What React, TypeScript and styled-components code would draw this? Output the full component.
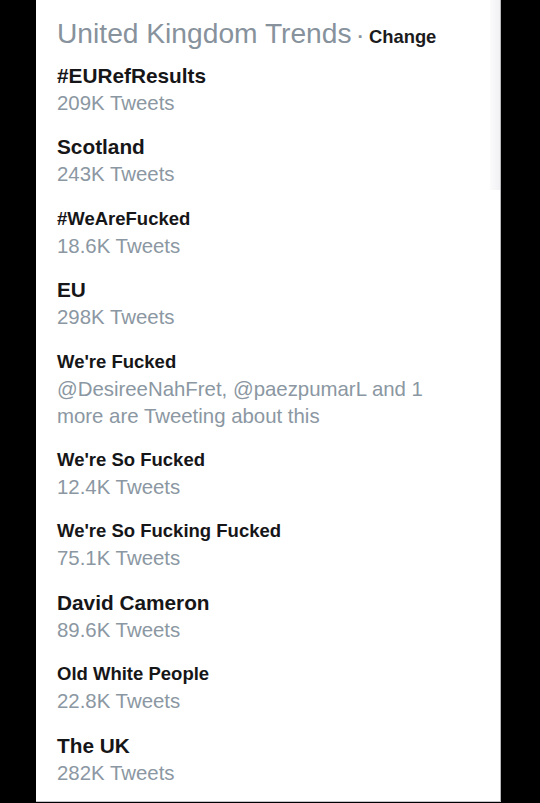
import React from "react";
import styled, { createGlobalStyle } from "styled-components";

const GlobalStyle = createGlobalStyle`
  html, body {
    margin: 0;
    padding: 0;
    background: #000;
  }
  * { box-sizing: border-box; }
`;

const Frame = styled.div`
  width: 540px;
  height: 803px;
  background: #000;
  padding-left: 36px;
  overflow: hidden;
`;

const Panel = styled.section`
  position: relative;
  width: 465px;
  height: 802px;
  background: #fff;
  border-right: 1px solid #b8b8bc;
  border-bottom: 1px solid #c4c4c8;
  padding: 17px 0 0 21px;
  font-family: "Liberation Sans", Arial, Helvetica, sans-serif;
`;

const ScrollTrack = styled.div`
  position: absolute;
  top: 0;
  right: 0;
  width: 10px;
  height: 190px;
  background: linear-gradient(to right, #fbfbfc, #f1f1f4);
`;

const Header = styled.header`
  display: flex;
  align-items: baseline;
  white-space: nowrap;
`;

const Title = styled.h2`
  margin: 0;
  font-size: 28.2px;
  line-height: 32px;
  font-weight: 400;
  color: #87929c;
`;

const Dot = styled.span`
  font-size: 19px;
  font-weight: 700;
  color: #8a959f;
  margin: 0 5px 0 6px;
`;

const ChangeLink = styled.span`
  font-size: 18.4px;
  font-weight: 700;
  color: #1b1b1d;
`;

const TrendList = styled.ol`
  list-style: none;
  margin: 13px 0 0;
  padding: 0;
  display: flex;
  flex-direction: column;
  gap: 16.4px;
`;

const Trend = styled.li`
  display: flex;
  flex-direction: column;
`;

const Name = styled.div<{ $small?: boolean }>`
  font-size: ${(p) => (p.$small ? "18.5px" : "20.8px")};
  line-height: 28px;
  font-weight: 700;
  color: #161618;
`;

const Meta = styled.div`
  max-width: 400px;
  font-size: 20.4px;
  line-height: 27px;
  color: #8b97a2;
`;

type TrendItem = { name: string; meta: string; small?: boolean };

const trends: TrendItem[] = [
  { name: "#EURefResults", meta: "209K Tweets" },
  { name: "Scotland", meta: "243K Tweets" },
  { name: "#WeAreFucked", meta: "18.6K Tweets", small: true },
  { name: "EU", meta: "298K Tweets" },
  {
    name: "We're Fucked",
    meta: "@DesireeNahFret, @paezpumarL and 1 more are Tweeting about this",
    small: true,
  },
  { name: "We're So Fucked", meta: "12.4K Tweets", small: true },
  { name: "We're So Fucking Fucked", meta: "75.1K Tweets", small: true },
  { name: "David Cameron", meta: "89.6K Tweets" },
  { name: "Old White People", meta: "22.8K Tweets", small: true },
  { name: "The UK", meta: "282K Tweets" },
];

export default function App() {
  return (
    <>
      <GlobalStyle />
      <Frame>
        <Panel>
          <ScrollTrack />
          <Header>
            <Title>United Kingdom Trends</Title>
            <Dot>·</Dot>
            <ChangeLink>Change</ChangeLink>
          </Header>
          <TrendList>
            {trends.map((t) => (
              <Trend key={t.name}>
                <Name $small={t.small}>{t.name}</Name>
                <Meta>{t.meta}</Meta>
              </Trend>
            ))}
          </TrendList>
        </Panel>
      </Frame>
    </>
  );
}
